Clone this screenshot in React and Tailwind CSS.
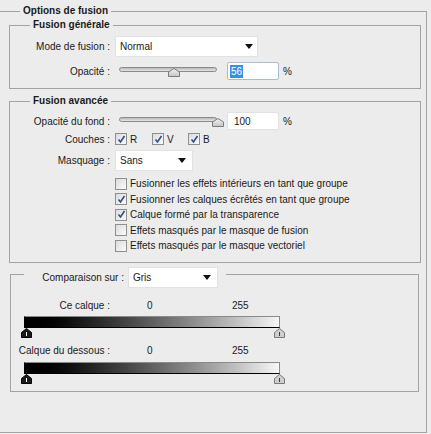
import React from 'react';

function SliderThumb() {
  return (
    <svg width="12" height="9" viewBox="0 0 12 9" className="block">
      <defs>
        <linearGradient id="thumbFill" x1="0" y1="0" x2="0" y2="1">
          <stop offset="0" stopColor="#f4f4f4" />
          <stop offset="1" stopColor="#c4c4c4" />
        </linearGradient>
      </defs>
      <polygon points="0.5,8.5 0.5,4 6,0.5 11.5,4 11.5,8.5" fill="url(#thumbFill)" stroke="#7c7c7c" />
    </svg>
  );
}

function LevelThumb({ dark }) {
  return (
    <svg width="11" height="10" viewBox="0 0 11 10" className="block">
      <polygon
        points="0.5,9.5 0.5,4.5 5.5,0.5 10.5,4.5 10.5,9.5"
        fill={dark ? '#1a1a1a' : '#cfcfcf'}
        stroke={dark ? '#000' : '#7a7a7a'}
      />
      <line x1="5.5" y1="4" x2="5.5" y2="8" stroke={dark ? '#fff' : '#3a3a3a'} strokeWidth="1" />
    </svg>
  );
}

function Arrow() {
  return (
    <svg width="8" height="5" viewBox="0 0 8 5" className="block">
      <polygon points="0,0 8,0 4,5" fill="#111" />
    </svg>
  );
}

function Check({ checked }) {
  return (
    <span className="w-[12px] h-[12px] border border-[#8e8f8f] bg-gradient-to-br from-[#dcdcdc] to-[#fafafa] flex items-center justify-center shrink-0">
      {checked && (
        <svg width="9" height="9" viewBox="0 0 9 9">
          <path d="M1.5 4.5 L3.5 7 L7.5 1" fill="none" stroke="#2d4f8c" strokeWidth="1.6" />
        </svg>
      )}
    </span>
  );
}

function Slider({ pos }) {
  return (
    <div className="relative w-[98px] h-[11px]">
      <div className="absolute left-0 right-0 top-[1px] h-[5px] rounded-full border border-[#8a8a8a] bg-gradient-to-b from-[#b8b8b8] to-[#e6e6e6]"></div>
      <div className="absolute top-[2px]" style={{ left: pos }}>
        <SliderThumb />
      </div>
    </div>
  );
}

const options = [
  { label: 'Fusionner les effets intérieurs en tant que groupe', checked: false },
  { label: 'Fusionner les calques écrêtés en tant que groupe', checked: true },
  { label: 'Calque formé par la transparence', checked: true },
  { label: 'Effets masqués par le masque de fusion', checked: false },
  { label: 'Effets masqués par le masque vectoriel', checked: false },
];

export default function App() {
  return (
    <div className="w-[431px] h-[434px] bg-[#ececec] overflow-hidden text-[10px] text-[#1a1a1a] font-['Liberation_Sans',Arial,sans-serif]">
      <div className="mt-[11px] w-[427px] h-[422px] border-t border-r border-b border-[#a3a3a3]">
        <div className="-mt-[8px] ml-[20px] w-fit px-[3px] bg-[#ececec] font-bold leading-[14px]">Options de fusion</div>

        {/* Fusion générale */}
        <div className="mt-[7px] ml-[9px] w-[412px] h-[64px] border border-[#a3a3a3]">
          <div className="-mt-[8px] ml-[20px] w-fit px-[3px] bg-[#ececec] font-bold leading-[14px]">Fusion générale</div>
          <div className="mt-[4px] h-[21px] flex items-center">
            <span className="w-[100px] text-right">Mode de fusion :</span>
            <div className="ml-[5px] w-[143px] h-[21px] bg-white border border-[#e2e2e2] flex items-center justify-between pl-[4px] pr-[4px]">
              <span>Normal</span>
              <Arrow />
            </div>
          </div>
          <div className="mt-[5px] h-[18px] flex items-center">
            <span className="w-[100px] text-right">Opacité :</span>
            <div className="ml-[9px]">
              <Slider pos={49} />
            </div>
            <div className="ml-[10px] w-[52px] h-[18px] bg-white border border-[#a9bdd6] rounded-[2px] flex items-center pl-[2px]">
              <span className="bg-[#3d8ee0] text-white px-[1px] leading-[13px]">56</span>
            </div>
            <span className="ml-[4px]">%</span>
          </div>
        </div>

        {/* Fusion avancée */}
        <div className="mt-[12px] ml-[9px] w-[412px] h-[162px] border border-[#a3a3a3]">
          <div className="-mt-[8px] ml-[20px] w-fit px-[3px] bg-[#ececec] font-bold leading-[14px]">Fusion avancée</div>
          <div className="mt-[4px] h-[18px] flex items-center">
            <span className="w-[100px] text-right">Opacité du fond :</span>
            <div className="ml-[9px]">
              <Slider pos={93} />
            </div>
            <div className="ml-[10px] w-[52px] h-[18px] bg-white border border-[#e2e2e2] rounded-[2px] flex items-center pl-[6px]">
              100
            </div>
            <span className="ml-[4px]">%</span>
          </div>
          <div className="mt-[2px] h-[14px] flex items-center">
            <span className="w-[100px] text-right">Couches :</span>
            <div className="ml-[5px] w-[37px] flex items-center gap-[3px]">
              <Check checked />
              <span>R</span>
            </div>
            <div className="w-[36px] flex items-center gap-[3px]">
              <Check checked />
              <span>V</span>
            </div>
            <div className="flex items-center gap-[3px]">
              <Check checked />
              <span>B</span>
            </div>
          </div>
          <div className="mt-[4px] h-[21px] flex items-center">
            <span className="w-[100px] text-right">Masquage :</span>
            <div className="ml-[5px] w-[78px] h-[21px] bg-white border border-[#e2e2e2] flex items-center justify-between pl-[4px] pr-[6px]">
              <span>Sans</span>
              <Arrow />
            </div>
          </div>
          <div className="mt-[5px] pl-[105px] flex flex-col">
            {options.map((o) => (
              <div key={o.label} className="h-[15.5px] flex items-center gap-[3px]">
                <Check checked={o.checked} />
                <span>{o.label}</span>
              </div>
            ))}
          </div>
        </div>

        {/* Comparaison */}
        <div className="mt-[11px] ml-[10px] w-[409px] h-[118px] border border-[#a3a3a3]">
          <div className="-mt-[8px] ml-[13px] w-fit pl-[17px] pr-[8px] bg-[#ececec] h-[21px] flex items-center">
            <span className="w-[83px] text-right">Comparaison sur :</span>
            <div className="ml-[4px] w-[90px] h-[21px] bg-white border border-[#e2e2e2] flex items-center justify-between pl-[4px] pr-[6px]">
              <span>Gris</span>
              <Arrow />
            </div>
          </div>

          <div className="mt-[10px] h-[14px] flex items-center">
            <span className="w-[99px] text-right">Ce calque :</span>
            <span className="ml-[37px] w-[85px]">0</span>
            <span>255</span>
          </div>
          <div className="mt-[4px] ml-[13px] w-[256px] h-[12px] border border-[#8a8a8a] border-l-black border-b-black bg-gradient-to-r from-black to-[#f6f6f6]"></div>
          <div className="ml-[10px] w-[264px] h-[10px] flex justify-between">
            <LevelThumb dark />
            <LevelThumb />
          </div>

          <div className="mt-[5px] h-[14px] flex items-center">
            <span className="w-[99px] text-right">Calque du dessous :</span>
            <span className="ml-[37px] w-[85px]">0</span>
            <span>255</span>
          </div>
          <div className="mt-[5px] ml-[13px] w-[256px] h-[12px] border border-[#8a8a8a] border-l-black border-b-black bg-gradient-to-r from-black to-[#f6f6f6]"></div>
          <div className="ml-[10px] w-[264px] h-[10px] flex justify-between">
            <LevelThumb dark />
            <LevelThumb />
          </div>
        </div>
      </div>
    </div>
  );
}
